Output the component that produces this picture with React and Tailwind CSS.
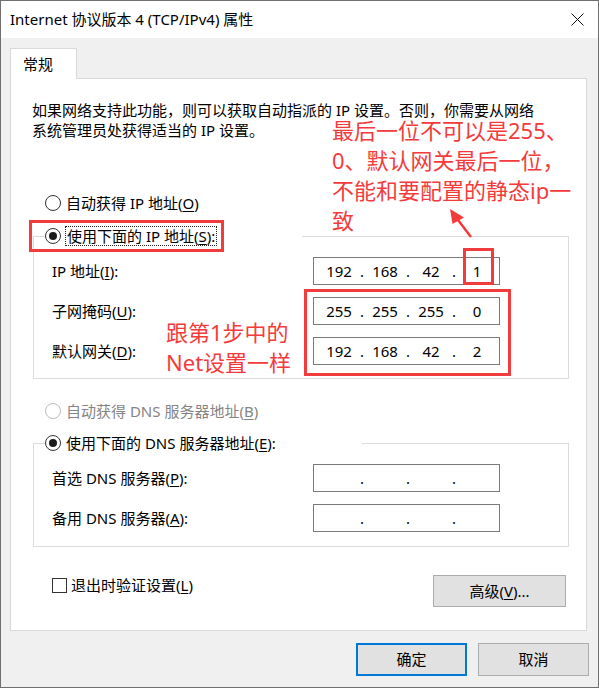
import React from 'react';

const font = "font-['Noto_Sans','Noto_Sans_CJK_SC',sans-serif]";

const Radio = ({ checked, disabled }) => (
  <span
    className={
      disabled
        ? 'w-[16px] h-[16px] rounded-full border border-[#bcbcbc] bg-white flex items-center justify-center shrink-0'
        : 'w-[16px] h-[16px] rounded-full border border-[#333333] bg-white flex items-center justify-center shrink-0'
    }
  >
    {checked && <span className="w-[8px] h-[8px] rounded-full bg-[#1b1b1b]" />}
  </span>
);

const Key = ({ children }) => <span className="underline underline-offset-2">{children}</span>;

const IpBox = ({ parts }) => (
  <div className="w-[187px] h-[28px] border border-[#7a7a7a] bg-white flex items-center pl-[4px] text-[15px]">
    {parts.map((p, i) => (
      <React.Fragment key={i}>
        <span className="w-[42px] text-center">{p}</span>
        {i < 3 && <span className="w-[4px] flex justify-center">.</span>}
      </React.Fragment>
    ))}
  </div>
);

const Row = ({ label, parts }) => (
  <div className="flex items-center h-[28px]">
    <span className="w-[261px] text-[15px]">{label}</span>
    <IpBox parts={parts} />
  </div>
);

export default function App() {
  return (
    <div className={`relative w-[599px] h-[688px] border border-[#6f6f6f] bg-[#f0f0f0] flex flex-col text-black ${font}`}>
      {/* title bar */}
      <div className="h-[37px] bg-white flex items-center justify-between pl-[9px] pr-[14px]">
        <span className="text-[15px]">Internet 协议版本 4 (TCP/IPv4) 属性</span>
        <svg width="13" height="13" viewBox="0 0 13 13">
          <path d="M0.5 0.5 L12.5 12.5 M12.5 0.5 L0.5 12.5" stroke="#111" strokeWidth="1" />
        </svg>
      </div>

      <div className="flex-1 px-[9px] pt-[10px]">
        <div className="relative z-10 -mb-px w-[67px] h-[31px] bg-white border border-b-0 border-[#d9d9d9] flex items-center pl-[12px] text-[15px]">
          常规
        </div>

        <div className="w-[577px] h-[553px] bg-white border border-[#d9d9d9] pl-[21px] pt-[21px]">
          <p className="text-[15px] leading-[20px]">
            如果网络支持此功能，则可以获取自动指派的 IP 设置。否则，你需要从网络
            <br />
            系统管理员处获得适当的 IP 设置。
          </p>

          <div className="mt-[53px] ml-[13px] h-[20px] flex items-center gap-[5px] text-[15px]">
            <Radio />
            <span>自动获得 IP 地址(<Key>O</Key>)</span>
          </div>

          <fieldset className="mt-[13px] ml-px w-[536px] border border-[#dcdcdc] pb-[13px]">
            <legend className="ml-[11px] w-[257px] bg-white">
              <div className="h-[20px] flex items-center gap-[4px] text-[15px]">
                <Radio checked />
                <span className="border border-dotted border-[#222] px-px leading-[18px]">
                  使用下面的 IP 地址(<Key>S</Key>):
                </span>
              </div>
            </legend>
            <div className="mt-[11px] pl-[18px] flex flex-col gap-[12px]">
              <Row label={<>IP 地址(<Key>I</Key>):</>} parts={['192', '168', '42', '1']} />
              <Row label={<>子网掩码(<Key>U</Key>):</>} parts={['255', '255', '255', '0']} />
              <Row label={<>默认网关(<Key>D</Key>):</>} parts={['192', '168', '42', '2']} />
            </div>
          </fieldset>

          <div className="mt-[22px] ml-[13px] h-[20px] flex items-center gap-[5px] text-[15px] text-[#858585]">
            <Radio disabled />
            <span>自动获得 DNS 服务器地址(<Key>B</Key>)</span>
          </div>

          <fieldset className="mt-[12px] ml-px w-[536px] border border-[#dcdcdc] pb-[14px]">
            <legend className="ml-[11px] w-[317px] bg-white">
              <div className="h-[20px] flex items-center gap-[5px] text-[15px]">
                <Radio checked />
                <span>使用下面的 DNS 服务器地址(<Key>E</Key>):</span>
              </div>
            </legend>
            <div className="mt-[11px] pl-[18px] flex flex-col gap-[12px]">
              <Row label={<>首选 DNS 服务器(<Key>P</Key>):</>} parts={['', '', '', '']} />
              <Row label={<>备用 DNS 服务器(<Key>A</Key>):</>} parts={['', '', '', '']} />
            </div>
          </fieldset>

          <div className="mt-[28px] ml-px w-[536px] flex items-start">
            <div className="ml-[19px] h-[20px] flex items-center gap-[4px] text-[15px]">
              <span className="w-[15px] h-[15px] border border-[#333333] bg-white" />
              <span>退出时验证设置(<Key>L</Key>)</span>
            </div>
            <button className="ml-auto mr-[3px] w-[133px] h-[32px] bg-[#e1e1e1] border border-[#adadad] text-[15px]">
              高级(<Key>V</Key>)...
            </button>
          </div>
        </div>

        <div className="mt-[12px] flex justify-end gap-[11px]">
          <button className="w-[111px] h-[33px] bg-[#e1e1e1] border-2 border-[#0078d7] text-[15px]">确定</button>
          <button className="w-[111px] h-[33px] bg-[#e1e1e1] border border-[#adadad] text-[15px]">取消</button>
        </div>
      </div>

      {/* annotations */}
      <div className="absolute left-[331px] top-[119px] flex flex-col gap-[10px] text-[22px] leading-[20px] text-[#f43b3b]">
        <span>最后一位不可以是255、</span>
        <span>0、默认网关最后一位，</span>
        <span>不能和要配置的静态ip一</span>
        <span>致</span>
      </div>
      <div className="absolute left-[165px] top-[316px] text-[22px] leading-[30px] text-[#f43b3b]">
        跟第1步中的
        <br />
        Net设置一样
      </div>
      <svg className="absolute left-[439px] top-[199px]" width="40" height="45" viewBox="0 0 40 45">
        <path d="M18 20 L31 37" stroke="#f43b3b" strokeWidth="2.5" />
        <path d="M10 9 L12.5 24 L24 17.5 Z" fill="#f43b3b" />
      </svg>
      <div className="absolute left-[28px] top-[219px] w-[195px] h-[32px] border-[3px] border-[#f03c3c]" />
      <div className="absolute left-[462px] top-[247px] w-[31px] h-[37px] border-[3px] border-[#f03c3c]" />
      <div className="absolute left-[303px] top-[288px] w-[207px] h-[87px] border-[3px] border-[#f03c3c]" />
    </div>
  );
}
